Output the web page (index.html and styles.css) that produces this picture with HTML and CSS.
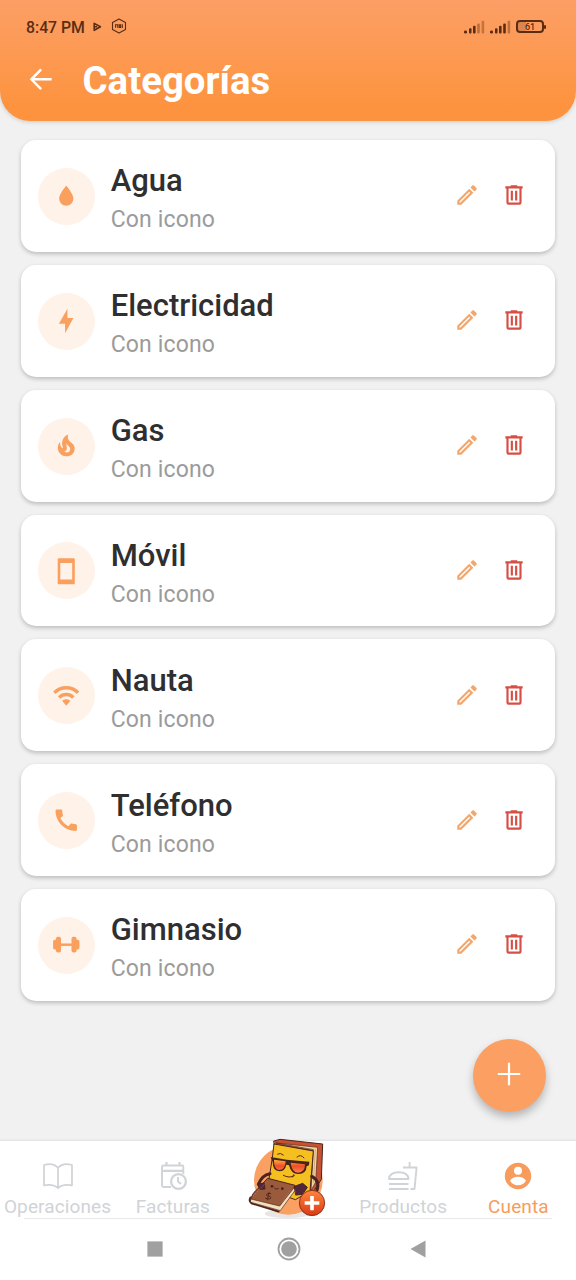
FILE: index.html
```html
<!DOCTYPE html>
<html lang="es">
<head>
<meta charset="utf-8">
<title>Categorías</title>
<link rel="stylesheet" href="styles.css">
</head>
<body>
<svg class="defs" aria-hidden="true">
  <symbol id="edit" viewBox="0 0 24 24"><path d="M14.06 9.02l.92.92L5.92 19H5v-.92l9.06-9.06M17.66 3c-.25 0-.51.1-.7.29l-1.83 1.83 3.75 3.75 1.83-1.83c.39-.39.39-1.02 0-1.41l-2.34-2.34c-.2-.2-.45-.29-.71-.29zm-3.6 3.19L3 17.25V21h3.75L17.81 9.94l-3.75-3.75z"/></symbol>
  <symbol id="trash" viewBox="0 0 24 24"><path d="M9,3V4H4V6H5V19A2,2 0 0,0 7,21H17A2,2 0 0,0 19,19V6H20V4H15V3H9M7,6H17V19H7V6M9,8V17H11V8H9M13,8V17H15V8H13Z"/></symbol>
</svg>
<div class="app">
  <header class="header">
    <div class="status">
      <span class="time">8:47 PM</span>
      <svg class="status-play" viewBox="0 0 9 10"><path d="M1.2 1.4 7.4 4.8 1.2 8.3Z M1.2 4.8H4" fill="none" stroke="currentColor" stroke-width="1.6" stroke-linejoin="round"/></svg>
      <svg class="status-hex" viewBox="0 0 16 16"><path d="M8 1 14.500 4.500V11.500L8 15 1.500 11.500V4.500Z" fill="none" stroke="currentColor" stroke-width="1.1" stroke-linejoin="round"/><path d="M4.6 9.8V6.8H6.8V9.8M8.3 6.8H9.6V9.4H8.3ZM11.3 6.3V9.9" fill="none" stroke="currentColor" stroke-width="1.1"/></svg>
      <svg class="signal" viewBox="0 0 21 14"><g fill="currentColor"><rect x="0" y="10.5" width="3" height="3" rx="1.3"/><rect x="5" y="8.2" width="2.5" height="5.3" rx="1"/><rect x="9" y="5.8" width="2.6" height="7.7" rx="1"/><rect x="13.2" y="3.4" width="2.6" height="10.1" rx="1" opacity=".4"/><rect x="17.6" y=".7" width="2.6" height="12.8" rx="1" opacity=".35"/></g></svg>
      <svg class="signal second" viewBox="0 0 21 14"><g fill="currentColor"><rect x="0" y="10.5" width="3" height="3" rx="1.3"/><rect x="5" y="8.2" width="2.5" height="5.3" rx="1"/><rect x="9" y="5.8" width="2.6" height="7.7" rx="1"/><rect x="13.2" y="3.4" width="2.6" height="10.1" rx="1"/><rect x="17.6" y=".7" width="2.6" height="12.8" rx="1" opacity=".4"/></g></svg>
      <span class="battery">61</span>
    </div>
    <div class="title-row">
      <svg class="back" viewBox="0 0 24 24"><path d="M11.7 3 3 11.8 11.7 20.6M3.4 11.8H21" fill="none" stroke="#fff" stroke-width="2.2"/></svg>
      <h1 class="title">Categorías</h1>
    </div>
  </header>

  <main class="list">
    <article class="card">
      <span class="badge"><svg viewBox="0 0 24 24"><path d="M12,20A6,6 0 0,1 6,14C6,10 12,3.25 12,3.25C12,3.25 18,10 18,14A6,6 0 0,1 12,20Z"/></svg></span>
      <div class="text"><h2>Agua</h2><p>Con icono</p></div>
      <svg class="edit"><use href="#edit"/></svg><svg class="trash"><use href="#trash"/></svg>
    </article>
    <article class="card">
      <span class="badge"><svg viewBox="0 0 24 24"><path d="M11 14H5.8L13 1.5V9.2H18L11 22.2V14Z"/></svg></span>
      <div class="text"><h2>Electricidad</h2><p>Con icono</p></div>
      <svg class="edit"><use href="#edit"/></svg><svg class="trash"><use href="#trash"/></svg>
    </article>
    <article class="card">
      <span class="badge"><svg viewBox="-1.500 -1 27 27"><path d="M19.48,12.35c-1.57-4.08-7.16-4.3-5.81-10.23c0.1-0.44-0.37-0.78-0.75-0.55C9.29,3.71,6.68,8,8.87,13.62c0.18,0.46-0.36,0.89-0.75,0.59c-1.81-1.37-2-3.34-1.84-4.75c0.06-0.52-0.62-0.77-0.91-0.34C4.69,10.16,4,11.84,4,14.37c0.38,5.6,5.11,7.32,6.81,7.54c2.43,0.31,5.06-0.14,6.95-1.87C19.84,18.11,20.6,15.03,19.48,12.35z M10.2,17.38c1.44-0.35,2.18-1.39,2.38-2.31c0.33-1.43-0.96-2.83-0.09-5.09c0.33,1.87,3.27,3.04,3.27,5.08C15.84,17.59,13.1,19.76,10.2,17.38z"/></svg></span>
      <div class="text"><h2>Gas</h2><p>Con icono</p></div>
      <svg class="edit"><use href="#edit"/></svg><svg class="trash"><use href="#trash"/></svg>
    </article>
    <article class="card">
      <span class="badge"><svg viewBox="0 0 24 24"><path d="M18 1H6C5.200 1 4.8 1.400 4.8 2v20c0 .6.4 1 1.200 1h12c.8 0 1.200-.4 1.200-1v-20c0-.6-.4-1-1.200-1zM17 19H7V5h10v14z"/></svg></span>
      <div class="text"><h2>Móvil</h2><p>Con icono</p></div>
      <svg class="edit"><use href="#edit"/></svg><svg class="trash"><use href="#trash"/></svg>
    </article>
    <article class="card">
      <span class="badge"><svg viewBox="0 0 24 24"><path d="M1 8l2 2c4.97-4.97 13.03-4.97 18 0l2-2C16.93 1.93 7.08 1.93 1 8zm7.500 7.800l3.500 4.200 3.500-4.200c-1.900-1.800-5.100-1.800-7 0zm-3.500-3.800l2 2c2.76-2.76 7.24-2.76 10 0l2-2C15.14 8.14 8.87 8.14 5 12z"/></svg></span>
      <div class="text"><h2>Nauta</h2><p>Con icono</p></div>
      <svg class="edit"><use href="#edit"/></svg><svg class="trash"><use href="#trash"/></svg>
    </article>
    <article class="card">
      <span class="badge"><svg viewBox="0 0 24 24"><path d="M20.01 15.38c-1.23 0-2.42-.2-3.53-.56-.35-.12-.74-.03-1.01.24l-1.57 1.97c-2.83-1.35-5.48-3.9-6.89-6.83l1.95-1.66c.27-.28.35-.67.24-1.02-.37-1.11-.56-2.3-.56-3.53 0-.54-.45-.99-.99-.99H4.19C3.65 3 3 3.24 3 3.99 3 13.28 10.73 21 20.01 21c.71 0 .99-.63.99-1.18v-3.45c0-.54-.45-.99-.99-.99z"/></svg></span>
      <div class="text"><h2>Teléfono</h2><p>Con icono</p></div>
      <svg class="edit"><use href="#edit"/></svg><svg class="trash"><use href="#trash"/></svg>
    </article>
    <article class="card">
      <span class="badge"><svg viewBox="0 0 24 24"><rect x="3.300" y="4.8" width="4.3" height="13.4" rx="1.7"/><rect x=".9" y="7.4" width="4" height="8.2" rx="1.4"/><rect x="16.4" y="4.8" width="4.3" height="13.4" rx="1.7"/><rect x="19.1" y="7.4" width="4" height="8.2" rx="1.4"/><path d="M7 10.5H17V12.6H7Z"/></svg></span>
      <div class="text"><h2>Gimnasio</h2><p>Con icono</p></div>
      <svg class="edit"><use href="#edit"/></svg><svg class="trash"><use href="#trash"/></svg>
    </article>
  </main>

  <button class="fab" aria-label="Añadir"><svg viewBox="0 0 24 24"><path d="M12 .8V23.2M.8 12H23.2" stroke="#fff" stroke-width="2.2"/></svg></button>

  <nav class="tabs">
    <a class="tab"><svg viewBox="0 0 32 32"><path d="M2 5C7 3.6 12.6 3.8 16 8 19.4 3.8 25 3.6 30 5V25.300C25 24.600 19 24.800 16 28.200 13 24.800 7 24.600 2 25.300ZM16 8V28" fill="none" stroke="currentColor" stroke-width="1.7" stroke-linejoin="round"/></svg><span>Operaciones</span></a>
    <a class="tab"><svg viewBox="0 0 32 32"><path d="M14 27H6.500Q5 27 5 25.500V7Q5 5.500 6.500 5.500H25Q26.300 5.500 26.300 7V14" fill="none" stroke="currentColor" stroke-width="1.900"/><path d="M5 10.800H26M9.500 2V6M22.500 2V6" stroke="currentColor" stroke-width="2.200"/><circle cx="21.500" cy="21.500" r="7.400" fill="none" stroke="currentColor" stroke-width="2.300"/><path d="M21 17V21.500L24 24" fill="none" stroke="currentColor" stroke-width="1.900"/></svg><span>Facturas</span></a>
    <a class="tab mascot-tab" aria-label="Añadir operación">
      <svg class="mascot" viewBox="45 30 255 255">
        <defs><linearGradient id="lens" x1="0" y1="0" x2="0" y2="1"><stop offset="0" stop-color="#ffae45"/><stop offset=".5" stop-color="#f04c28"/><stop offset="1" stop-color="#ff8546"/></linearGradient><linearGradient id="plus" x1="0" y1="0" x2="0" y2="1"><stop offset="0" stop-color="#ff853c"/><stop offset="1" stop-color="#db3a14"/></linearGradient></defs>
        <ellipse cx="172" cy="263" rx="68" ry="13" fill="#e9e5e5"/>
        <circle cx="175" cy="163" r="103" fill="#faa062"/>
        <g stroke="#4b2420" stroke-width="3" stroke-linejoin="round" stroke-linecap="round">
          <path d="M132 45 150 40 278 54 274 160 251 196 237 194 248 73 134 57Z" fill="#c65232"/>
          <path d="M139 51 263 64 257 168 243 194 250 72Z" fill="#f4d5a0" stroke-width="2"/>
          <path d="M256 70 250 170" stroke="#b17c4e" stroke-width="1.500"/>
          <path d="M133 54 250 75 240 196 196 221 112 190 127 96Z" fill="#f5c01f"/>
          <path d="M245 151Q272 164 260 196M120 143Q96 147 85 175" fill="none" stroke-width="9"/>
          <path d="M114 157 195 178Q185 210 155 232L149 243 62 224Q64 202 86 186Z" fill="#9a5a3c"/>
          <path d="M62 219 149 240 193 184 196 192 151 254 63 229Z" fill="#f5dfbb" stroke-width="2"/>
          <path d="M61 214Q55 226 64 232L146 257" fill="none" stroke-width="5"/>
          <path d="M84 174 103 171 105 189 90 190ZM194 181 218 172 232 184 218 205 198 207Z" fill="#51263c"/>
        </g>
        <path d="M122 93 170 101 238 107 237 118 230 121Q229 145 204 144 183 144 177 118L169 116Q165 136 148 136 128 135 128 108Z" fill="#47251e"/>
        <path d="M132 101 167 106Q166 132 147 132 131 130 132 101ZM182 110 225 115Q225 140 204 140 185 138 182 110Z" fill="url(#lens)"/>
        <g fill="none" stroke="#58271d" stroke-width="3" stroke-linecap="round"><path d="M143 84Q151 79 160 87M201 93Q213 83 222 96M160 148Q178 158 193 149M188 153 191 146M133 186Q137 193 145 188"/><path d="M122 203Q109 200 110 208 110 210 118 211 126 214 121 218 116 221 107 217M117 199 112 222"/></g>
        <circle cx="126" cy="181" r="4" fill="#48211c"/><circle cx="157" cy="188" r="4" fill="#48211c"/><path d="M69 210 114 164M155 231 183 191" stroke="#c27b4b" stroke-width="2" stroke-dasharray="5 3"/>
        <circle cx="246" cy="231" r="38" fill="url(#plus)" stroke="#73261b" stroke-width="2.500"/>
        <path d="M246 210V253M224 231H268" stroke="#fff" stroke-width="11"/>
      </svg>
    </a>
    <a class="tab"><svg viewBox="0 0 32 32"><path d="M2 19Q2.500 12.300 11.800 12.300T21.500 19ZM2 24H21.500M2 29H21.500M23.500 29H27.500L29.600 7.500H16M22.600 7V2" fill="none" stroke="currentColor" stroke-width="1.900" stroke-linejoin="round"/></svg><span>Productos</span></a>
    <a class="tab active"><svg viewBox="0 0 32 32"><circle cx="16" cy="16" r="13.200" fill="currentColor"/><circle cx="16" cy="10.700" r="4" fill="#fff"/><path d="M8 20.500Q10.500 16.700 16 16.700T24 20.500Q21.500 25.300 16 25.300T8 20.500Z" fill="#fff"/></svg><span>Cuenta</span></a>
  </nav>
  <footer class="system">
    <svg viewBox="0 0 24 24"><rect x="4.400" y="4.400" width="15.200" height="15.200"/></svg>
    <svg viewBox="0 0 24 24"><circle cx="12" cy="12" r="10.500" fill="none" stroke="#a0a0a0" stroke-width="1.800"/><circle cx="12" cy="12" r="7.800"/></svg>
    <svg viewBox="0 0 24 24"><path d="M4.500 12 19.500 3.500V20.500Z"/></svg>
  </footer>
</div>
</body>
</html>
```
FILE: styles.css
```css
* { box-sizing: border-box; margin: 0; padding: 0; }
body { background: #f1f1f1; font-family: Roboto, "Liberation Sans", sans-serif; }
svg { display: block; flex: none; }
.defs { display: none; }
.app { position: relative; width: 576px; height: 1280px; display: flex; flex-direction: column; overflow: hidden; }

.header { height: 121px; flex: none; background: linear-gradient(#fc9f66, #fd933e 90%); border-radius: 0 0 30px 30px; box-shadow: 0 1px 4px rgba(0,0,0,.16); }
.status { height: 54px; padding: 0 32px 0 26px; display: flex; align-items: center; color: #5a2c14; }
.time { font-size: 15.8px; line-height: 20px; font-weight: 500; width: 66px; padding-top: 1px; white-space: nowrap; }
.status-play { width: 9px; height: 10px; margin: 0 9px 1px 1px; }
.status-hex { width: 16px; height: 16px; margin-bottom: 2px; }
.signal { width: 21px; height: 14px; margin-left: auto; }
.signal.second { margin-left: 5px; margin-right: 5px; }
.battery { position: relative; width: 28px; height: 13px; margin-bottom: 1px; border: 2px solid; border-radius: 4px; font-size: 9px; font-weight: 500; line-height: 10px; text-align: center; background: linear-gradient(90deg, rgba(90,44,20,.2) 35%, transparent 35%); }
.battery::after { content: ""; position: absolute; right: -4px; top: 3px; width: 2px; height: 4px; background: currentColor; border-radius: 1px; }
.title-row { display: flex; align-items: center; height: 52px; padding-left: 28px; }
.back { width: 27px; height: 27px; margin-bottom: 2px; }
.title { margin-left: 27.5px; padding-top: 1px; color: #fff; font-size: 38.4px; line-height: 46px; font-weight: 700; }

.list { flex: 1; padding: 19px 21px 0; display: flex; flex-direction: column; gap: 13px; }
.card { height: 111.85px; flex: none; display: flex; align-items: center; padding: 0 28px 0 17px; background: #fff; border-radius: 15px; box-shadow: 0 2px 4px rgba(0,0,0,.22); }
.badge { width: 57px; height: 57px; margin-top: 1px; border-radius: 50%; background: #fef2e9; display: flex; align-items: center; justify-content: center; }
.badge svg { width: 28.5px; height: 28.5px; fill: #f9a05f; }
.text { flex: 1; margin-left: 15.7px; padding-top: 8px; }
.text h2 { font-size: 31px; line-height: 40px; font-weight: 500; color: #2f2f31; }
.text p { font-size: 23px; line-height: 37px; color: #9b9b9b; letter-spacing: .15px; }
.edit, .trash { width: 26px; height: 26px; margin-bottom: 1px; }
.edit { fill: #f3a66b; margin-right: 21px; }
.trash { fill: #d64f45; }

.fab { position: absolute; left: 473px; top: 1039px; width: 73px; height: 73px; border: 0; border-radius: 50%; background: #fc9f62; display: flex; align-items: center; justify-content: center; box-shadow: 0 5px 9px rgba(0,0,0,.25); }
.fab svg { width: 24px; height: 24px; margin: 0 2px 3px 0; }

.tabs { position: relative; height: 78px; flex: none; display: grid; grid-template-columns: repeat(5, 1fr); background: #fff; box-shadow: 0 -1px 2px rgba(0,0,0,.08); }
.tabs::after { content: ""; position: absolute; left: 24px; right: 24px; bottom: 0; height: 1px; background: #e8e8e8; }
.tab { display: flex; flex-direction: column; align-items: center; padding-top: 19px; color: #d0d3d7; min-width: 0; }
.tab > svg { width: 32px; height: 32px; }
.tab span { font-size: 19px; line-height: 24px; margin-top: 3px; letter-spacing: .12px; white-space: nowrap; }
.tab.active { color: #f79c5c; }
.mascot-tab { position: relative; z-index: 1; padding: 0; }
.tab > .mascot { width: 85px; height: 85px; margin-top: -5px; }
.system { height: 61px; flex: none; display: flex; gap: 109.500px; padding: 18px 0 0 143px; background: #fff; }
.system svg { width: 24px; height: 24px; fill: #a0a0a0; }
.system svg:last-child { margin-left: -4px; }
```
